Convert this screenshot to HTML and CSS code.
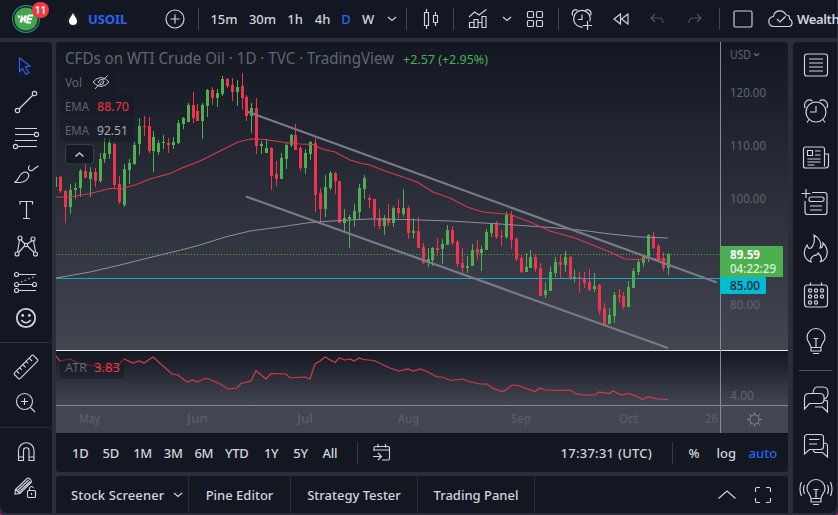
FILE: index.html
```
<!DOCTYPE html>
<html lang="en">
<head>
<meta charset="utf-8">
<title>USOIL</title>
<link rel="stylesheet" href="styles.css">
</head>
<body>
<div class="app">
  <header class="topbar">
    <div class="cell logo">
      <svg class="i" viewBox="-14 -14 28 28"><circle r="13.4" stroke="#1f8f83"/><circle r="11.6" fill="#43a64a" stroke="none"/><path d="M-7.500-3.500l1 2.500M-4-3.500L-5.500 3.500 0-3.500-1.500 3.500M2-3.500h5M1 0h5M0 3.500h5M2.500-3.500L1 3.500" stroke="#fff" stroke-width="1.900"/></svg>
      <span class="badge">11</span>
    </div>
    <div class="cell symbol">
      <svg class="i" viewBox="-14 -14 28 28"><circle r="8" fill="#1b1d21" stroke="none"/><path d="M0-6C2-2 4-.5 4 2a4 4 0 0 1-8 0C-4-.5-2-2 0-6z" fill="#fff" stroke="none"/></svg>
      <span>USOIL</span>
    </div>
    <div class="cell div"><svg class="i" viewBox="-14 -14 28 28"><circle r="9"/><path d="M-4.5 0h9M0-4.5v9"/></svg></div>
    <div class="cell"></div>
    <div class="cell">15m</div>
    <div class="cell">30m</div>
    <div class="cell">1h</div>
    <div class="cell">4h</div>
    <div class="cell blue">D</div>
    <div class="cell">W</div>
    <div class="cell"><svg class="i" viewBox="-14 -14 28 28"><path d="M-4-2l4 3.5L4-2"/></svg></div>
    <div class="cell div"></div>
    <div class="cell div"><svg class="i" viewBox="-14 -14 28 28"><path d="M-6.5-6.500h4v13h-4zM-4.500-10v3.500M-4.500 6.500v3.500M2.500-3.500h4v7h-4zM4.500-7v3.500M4.500 3.500v3.500"/></svg></div>
    <div class="cell"><svg class="i" viewBox="-14 -14 28 28"><path d="M-8.500 8.500v-5h4.500v5zM-4 8.500v-8h4v8zM0 8.500v-5h4v5M4 8.500v-11h4v11zM-9-2l5.500-5 4.500 3 7.500-5.500"/></svg></div>
    <div class="cell"><svg class="i" viewBox="-14 -14 28 28"><path d="M-4-2l4 3.500L4-2"/></svg></div>
    <div class="cell div"><svg class="i" viewBox="-14 -14 28 28"><rect x="-7.500" y="-7.500" width="6" height="6" rx="1"/><rect x="1.500" y="-7.500" width="6" height="6" rx="1"/><rect x="-7.500" y="1.500" width="6" height="6" rx="1"/><rect x="1.500" y="1.500" width="6" height="6" rx="1"/></svg></div>
    <div class="cell"><svg class="i" viewBox="-14 -14 28 28"><path d="M1 8A8.300 8.300 0 1 1 7.800 2.500M0-4.500v5h-4M-9.500-3.500C-11-8-7-10.500-4.500-8.500M8.500-3.500C10.500-8 6-10.500 3.500-8.500M5.500 2v9M1 6.500h9"/></svg></div>
    <div class="cell"><svg class="i" viewBox="-14 -14 28 28"><path d="M-.5-5v10l-6.500-5zM7-5v10L.5 0z"/></svg></div>
    <div class="cell dim"><svg class="i" viewBox="-14 -14 28 28"><path d="M-2-5l-4 4 4 4M-6-1H2q4 0 4 5"/></svg></div>
    <div class="cell dim"><svg class="i" viewBox="-14 -14 28 28"><path d="M2-5l4 4-4 4M6-1h-8q-4 0-4 5"/></svg></div>
    <div class="cell div"></div>
    <div class="cell"><svg class="i" viewBox="-14 -14 28 28"><rect x="-9" y="-8" width="18" height="16" rx="1.500"/></svg></div>
    <div class="cell cloud"><svg class="i" viewBox="-14 -14 28 28"><path d="M-7 7.500a5 5 0 0 1-.5-10c1-7 10-7.500 12.500-1.500 3 0 4 1.500 3.500 4 4 2 3 7.500-.5 7.500zM-4 0l3 3 5.500-5.500"/></svg><span>Wealth</span></div>
  </header>

  <nav class="left">
    <div class="tool blue"><svg class="i" viewBox="-14 -14 28 28"><path d="M-6.500-8l10.500 8-4.500 1 3.500 6-3 1.500-3.500-6-3 3z"/></svg></div>
    <div class="tool"><svg class="i" viewBox="-14 -14 28 28"><circle cx="8.500" cy="-8.500" r="2.200"/><circle cx="-8.500" cy="8.500" r="2.200"/><path d="M7-7L-7 7"/></svg></div>
    <div class="tool"><svg class="i" viewBox="-14 -14 28 28"><path d="M-11-9.500h22M-11-3.500H8.500M-11 2.500h22M-8.500 8.500H11"/><circle cx="10.500" cy="-3.500" r="2.100"/><circle cx="-10.500" cy="8.500" r="2.100"/></svg></div>
    <div class="tool"><svg class="i" viewBox="-14 -14 28 28"><path d="M-11.500 8.500C-6 6-8-1-1-2c3 0 5 3 3 6-3 5-8 4.500-13.500 4.500M2.500-6.500c0 5 5 3 6 1L12.500-8M2.500-6.500l1-2"/></svg></div>
    <div class="tool"><svg class="i" viewBox="-14 -14 28 28"><path d="M-6-5.500v-3H6.500v3M.5-8.500V8.500M-3 8.500h7"/></svg></div>
    <div class="tool"><svg class="i" viewBox="-14 -14 28 28"><circle cx="-6" cy="-8" r="2"/><circle cx="7" cy="-7" r="2"/><circle cx="-9" cy="8" r="2"/><circle cx="9.500" cy="8" r="2"/><circle cy="-1" r="1.600"/><path d="M-6.500-6L-8.500 6M-5-6l4 4M6-5.500L1.500-2M7.500-5l2 11M-7.500 6.500L-1.500 0M1.500 0L8 6.500"/></svg></div>
    <div class="tool"><svg class="i" viewBox="-14 -14 28 28"><circle cx="-9.500" cy="-7.500" r="2"/><circle cx="-9.500" cy="2.500" r="2"/><circle cx="8.500" cy="2.500" r="2"/><circle cx="-9.500" cy="8.500" r="2"/><path d="M-7.500-7.500H10M-7.500 2.500H6.500M-7.500 8.500H10"/><path d="M-5 0L10-6" stroke-dasharray="1.500 2.500"/></svg></div>
    <div class="tool"><svg class="i" viewBox="-14 -14 28 28"><circle r="9.200" stroke-width="1.800"/><circle cx="-3.300" cy="-2.500" r="1.400" fill="currentColor" stroke="none"/><circle cx="3.300" cy="-2.500" r="1.400" fill="currentColor" stroke="none"/><path d="M-4.800 2q4.800 5.500 9.600 0" stroke-width="1.500"/></svg></div>
    <hr>
    <div class="tool"><svg class="i" viewBox="-14 -14 28 28"><g transform="rotate(-45)"><rect x="-13.500" y="-4" width="27" height="8" rx="1.500"/><path d="M-9.500-4v4M-5-4v3M-.5-4v4M4-4v3M8.500-4v4"/></g></svg></div>
    <div class="tool"><svg class="i" viewBox="-14 -14 28 28"><circle cx="-1.500" cy="-1.500" r="8"/><path d="M4.500 4.500l4.500 4.500M-5 -1.500h7M-1.500-5v7"/></svg></div>
    <hr>
    <div class="tool"><svg class="i" viewBox="-14 -14 28 28"><path d="M-7.500 8.500V-1.500a7.500 7.500 0 0 1 15.500 0v10H3v-10a2.700 2.700 0 0 0-5.500 0v10zM-7.500 5h5M3 5h5"/></svg></div>
    <div class="tool"><svg class="i" viewBox="-14 -14 28 28"><path d="M-10.500 1.500L1.500-10q3 0 4 4L-6 5.500l-5 .5zM-8.500 2.500L2.500-8M-7 4L4-6.500M-10.500 1.500l4.500 4"/><rect x="1.500" y="2.500" width="8" height="7" rx="1"/><path d="M3.500 2V0q2-3 4 0M5.500 5v2"/></svg></div>
  </nav>

  <main class="chart">
    <svg class="plot" width="732" height="391" viewBox="56 42 732 391">
      <defs><linearGradient id="g" x1="0" y1="0" x2="0" y2="1"><stop offset="0" stop-color="#131722"/><stop offset="1" stop-color="#434651"/></linearGradient></defs>
      <rect x="56" y="42" width="732" height="308" fill="url(#g)"/>
      <rect x="56" y="351" width="732" height="54" fill="url(#g)"/>
      <rect x="56" y="405" width="732" height="28" fill="#434651"/>
      <path class="price" d="M56 254.500H720"/>
      <g id="candles"></g>
      <path class="level" d="M56 278.500H720"/>
      <path class="ema slow" d="M56 278L90 272 120 265 150 257.500 185 249 200 245 225 237 250 231 280 227 310 222.500 340 220.500 370 219 405 219.500 450 221 500 224 550 227.500 580 230 610 234 640 237 668 238"/>
      <path class="ema" d="M56 197L70 197 90 193.500 110 188.500 122 188.500 135 185 150 179 170 173.500 182 168 200 161 220 151 238 142 250 139 265 139.500 285 142.500 300 144 313 144.500 322 149 335 152 350 160 360 163 370 165 385 171 400 176 417 182 433 192 450 198 467 207 483 212 510 214.500 530 222 550 231 575 238 600 248 612 253 625 259 640 259.500 650 258 668 260"/>
      <path class="trend" d="M247 111.500L717 282.500M246 196.500L668 348"/>
      <path class="ema" d="M56 356L60 361 70 359 78 363 88 365 100 367 112 368 120 363 124 359 133 363 139 361 144 363 153 357 172 374 178 375 187 382 193 380 197 382 205 378.500 209 379 220 384 228 389 237 388 241 383.500 251 381 256 370.500 266 379 271 373.500 286 374 290 378 305 377 310 379 315 364 320 361 325 357 335 362.500 339 358 345 360 350 359 354 361 359 358 363 359.500 374 360.500 390 368 399 371 408 369 413 371 420 369 427 371.500 437 377 442 377 451 380.500 463 379 467 381 480 384 487 384 492 388 502 391.500 506 390 512 385 518 385.500 535 391.500 540 388 545 390 560 390.500 570 390 575 393.500 583 395 595 395 599 392 609 393.500 613 391 621 395 629 393.500 636 396 643 399.500 648 397 658 399 668 399.500"/>
      <rect x="56" y="350" width="732" height="1" fill="#e8e9ec"/>
      <path d="M56 405.500H788M720.500 42V433" stroke="#868993" fill="none"/>
      <g class="panel"><rect x="60" y="71" width="54" height="23"/><rect x="60" y="95" width="74" height="23"/><rect x="60" y="119" width="74" height="23"/><rect x="60" y="356" width="64" height="23"/></g>
      <rect x="65.500" y="144.500" width="28" height="19.500" rx="3" fill="#161a25" stroke="#3a3e49"/>
      <path class="eye" d="M75.500 156.500l4-3.500 4 3.500" stroke-width="1.600"/>
      <path class="eye" d="M93 82q8-9 16 0-8 9-16 0M95 89L107.500 75.500M98 83q1-4 5-4M104 81q0 4-4 4"/>
      <g class="lab">
        <text class="title" x="65" y="64" textLength="329" lengthAdjust="spacingAndGlyphs">CFDs on WTI Crude Oil · 1D · TVC · TradingView</text>
        <text class="val gain" x="403" y="63.500" textLength="85" lengthAdjust="spacingAndGlyphs">+2.57 (+2.95%)</text>
        <text x="65" y="86.500" textLength="17" lengthAdjust="spacingAndGlyphs">Vol</text>
        <text x="65" y="111" textLength="24" lengthAdjust="spacingAndGlyphs">EMA</text><text class="val red" x="97" y="111" textLength="32" lengthAdjust="spacingAndGlyphs">88.70</text>
        <text x="65" y="135" textLength="24" lengthAdjust="spacingAndGlyphs">EMA</text><text class="val gray" x="97" y="135" textLength="31" lengthAdjust="spacingAndGlyphs">92.51</text>
        <text x="65" y="372" textLength="22" lengthAdjust="spacingAndGlyphs">ATR</text><text class="val red" x="94" y="372" textLength="26" lengthAdjust="spacingAndGlyphs">3.83</text>
        <text x="730" y="59" textLength="21" lengthAdjust="spacingAndGlyphs">USD</text>
        <text x="730" y="97" textLength="36" lengthAdjust="spacingAndGlyphs">120.00</text>
        <text x="730" y="150" textLength="36" lengthAdjust="spacingAndGlyphs">110.00</text>
        <text x="730" y="203" textLength="36" lengthAdjust="spacingAndGlyphs">100.00</text>
        <text x="730" y="309" textLength="30" lengthAdjust="spacingAndGlyphs">80.00</text>
        <text x="730" y="400" textLength="24" lengthAdjust="spacingAndGlyphs">4.00</text>
      </g>
      <path d="M754 53.500l2.500 2 2.500-2" fill="none" stroke="#6d707b" stroke-width="1.400"/>
      <g class="lab time">
        <text x="79" y="423" textLength="21" lengthAdjust="spacingAndGlyphs">May</text><text x="187" y="423" textLength="21" lengthAdjust="spacingAndGlyphs">Jun</text><text x="297" y="423" textLength="16" lengthAdjust="spacingAndGlyphs">Jul</text><text x="398" y="423" textLength="21" lengthAdjust="spacingAndGlyphs">Aug</text><text x="511" y="423" textLength="20" lengthAdjust="spacingAndGlyphs">Sep</text><text x="619" y="423" textLength="19" lengthAdjust="spacingAndGlyphs">Oct</text><text x="705" y="423" textLength="13" lengthAdjust="spacingAndGlyphs">26</text>
      </g>
      <rect x="720" y="246" width="63" height="31" rx="1" fill="#4caf50"/>
      <rect x="720" y="277" width="46" height="17" rx="1" fill="#00bcd4"/>
      <g class="tag"><text class="strong" x="730" y="258.500" textLength="30" lengthAdjust="spacingAndGlyphs" fill="#fff">89.59</text><text x="730" y="273" textLength="46" lengthAdjust="spacingAndGlyphs" fill="#d9f3da">04:22:29</text><text x="730" y="290" textLength="30" lengthAdjust="spacingAndGlyphs" fill="#0c2228">85.00</text></g>
      <g transform="translate(754.500 419.500)" stroke="#858893" fill="none"><circle r="4.700"/><path d="M0-5v-2.500M0 5v2.500M-5 0h-2.500M5 0h2.500M-3.500-3.500l-1.800-1.800M3.500 3.500l1.800 1.800M-3.500 3.500l-1.800 1.800M3.500-3.500l1.800-1.800"/></g>
    </svg>
    <div class="ranges">
      <span>1D</span><span>5D</span><span>1M</span><span>3M</span><span>6M</span><span>YTD</span><span>1Y</span><span>5Y</span><span>All</span>
      <b class="bar"></b>
      <svg class="i cal" viewBox="-14 -14 28 28"><path d="M-8-2v-3q0-1.500 1.500-1.500H6q1.500 0 1.500 1.500V5q0 2-1.500 2H0M-8-3H7.500M-4-9v3.500M3.500-9v3.500M-9 3.500h8M-4 0l3.500 3.500L-4 7"/></svg>
      <span class="clock">17:37:31 (UTC)</span>
      <b class="bar"></b>
      <span class="pct">%</span><span class="log">log</span><span class="blue auto">auto</span>
    </div>
  </main>

  <footer class="tabs">
    <div class="tab first">Stock Screener<svg class="i" viewBox="-14 -14 28 28"><path d="M-4-2l4 3.500L4-2"/></svg></div>
    <div class="tab">Pine Editor</div>
    <div class="tab">Strategy Tester</div>
    <div class="tab">Trading Panel</div>
    <div class="ends">
      <svg class="i" viewBox="-14 -14 28 28"><path d="M-8.500 3.500L0-4l8.500 7.500"/></svg>
      <svg class="i" viewBox="-14 -14 28 28"><path d="M-7.500-3v-3q0-1.500 1.500-1.500h3M3-7.500h3q1.500 0 1.500 1.500v3M7.500 3v3q0 1.500-1.500 1.500H3M-3 7.500h-3q-1.500 0-1.500-1.500V3"/></svg>
    </div>
  </footer>

  <aside class="right">
    <div class="rt"><svg class="i" viewBox="-14 -14 28 28"><rect x="-11.500" y="-11" width="23" height="22" rx="2.500"/><path d="M-7-6H7M-7-2H7M-7 2H7M-7 6H7"/></svg></div>
    <div class="rt"><svg class="i" viewBox="-14 -14 28 28"><circle cy="1" r="10"/><path d="M0-5v6h-6M-11-3C-13-9-8-13-3.500-10M11-3C13-9 8-13 3.500-10M-7 8.500l-2 3M7 8.500l2 3"/></svg></div>
    <div class="rt"><svg class="i" viewBox="-14 -14 28 28"><path d="M8.500 9.500V-8q0-2-2-2h-17q-2 0-2 2V9q0 2 2 2h20q3 0 3-3v-11h-4M-8.500-6.500h5v5h-5zM-1-6h5.500M-1-2h5.500M-8.500 2H4.500M-8.500 5H4.500M-8.500 8h7"/></svg></div>
    <div class="rt"><svg class="i" viewBox="-14 -14 28 28"><path d="M-11-2V9q0 2.500 2.500 2.500h17q2.500 0 2.500-2.500V-8q0-2.500-2.500-2.500H-4M-10-14v9M-14.500-9.500h9M-6 3H6M-6 7H6"/><rect x="-7" y="-6" width="15" height="4.500" rx="2"/></svg></div>
    <div class="rt"><svg class="i" viewBox="-14 -14 28 28"><path d="M-5 13C-13 10-13 2-9-4c1 3 2 4 4 3 3-3 4-7 3-13C4-11 6-5 4-1c2 0 3-2 3-5C13 0 13 10 4 13c3-3 1-6-2-9-1 2-2 3-3 2-4 2-5 4-4 7z"/></svg></div>
    <div class="rt"><svg class="i" viewBox="-14 -14 28 28"><rect x="-11.500" y="-10" width="23" height="22" rx="3"/><path d="M-5.500-12.500v3M5.500-12.500v3"/><g><circle cx="-6" cy="-4.500" r="1.600"/><circle cy="-4.500" r="1.600"/><circle cx="6" cy="-4.500" r="1.600"/><circle cx="-6" cy="1.500" r="1.600"/><circle cy="1.500" r="1.600"/><circle cx="6" cy="1.500" r="1.600"/><circle cx="-6" cy="7.500" r="1.600"/><circle cy="7.500" r="1.600"/></g></svg></div>
    <div class="rt"><svg class="i" viewBox="-14 -14 28 28"><path d="M-5 6.500C-5 3-9 1-9-3.500a9 9 0 0 1 18 0C9 1 5 3 5 6.500zM-5 6.500V10h10V6.500M-3 12.500h6M-2.500-2.500h5M0-2.500v9"/></svg></div>
    <hr>
    <div class="rt"><svg class="i" viewBox="-14 -14 28 28"><path d="M-3-7q1-6 4-6h6q5 0 5 5.500T8-1M-7-6.500H4q4 0 4 4v2q0 4-4 4H-6.500L-11.500 9v-11q0-4.500 4.500-4.500zM8 0l3.500 1V12L6.500 7H-1"/></svg></div>
    <div class="rt"><svg class="i" viewBox="-14 -14 28 28"><path d="M-8.500-11.500H4.500q3 0 3 3v9q0 3-3 3h-11l-5 4.500V-8.500q0-3 3-3zM-7-6.500H3.500M-7-2H1M7.500-3q4 0 4 3v11l-5-4.500H-1l-2-2"/></svg></div>
    <div class="rt"><svg class="i" viewBox="-14 -14 28 28"><path d="M-5 6.500C-5 3-9 1-9-3.500a9 9 0 0 1 18 0C9 1 5 3 5 6.500zM-5 6.500V10h10V6.500M-3 12.500h6M-2.500-2.500h5M0-2.500v9M-11.500-7q-2 4 0 9M-14.500-10q-3 7 0 14M11.500-7q2 4 0 9M14.500-10q3 7 0 14"/></svg></div>
  </aside>
  <i class="corner bl"></i><i class="corner br"></i>
</div>
<script src="chart.js"></script>
</body>
</html>
```
FILE: styles.css
```
* { box-sizing: border-box; }
body {
  margin: 0;
  background: #2a2e39;
  color: #d1d4dc;
  font: 13px "Trebuchet MS", "Noto Sans", "Open Sans", sans-serif;
}
.app {
  position: relative;
  display: grid;
  width: 838px;
  height: 515px;
  overflow: hidden;
  grid-template: 38px 430px 37px / 52px 732px 45px;
  column-gap: 4px;
  row-gap: 4px;
  grid-template-areas: "top top top" "left chart right" "left tabs right";
}
.i { width: 28px; height: 28px; flex: none; overflow: visible; fill: none; stroke: currentColor; stroke-width: 1.15; }
.blue { color: #2f62f5; }
.dim { color: #50535e; }

.topbar {
  grid-area: top;
  display: grid;
  background: #131722;
  grid-template-columns: 52px 98px 49px 6px 38px 39px 26px 29px 18px 26px 22px 4px 47px 48px 9px 48px 46px 32px 40px 36px 7px 46px 72px;
  font-weight: 500;
}
.cell { position: relative; display: flex; align-items: center; justify-content: center; min-width: 0; white-space: nowrap; }
.div::after { content: ""; position: absolute; right: 0; top: 8px; width: 1px; height: 22px; background: #434651; }
.symbol { justify-content: flex-start; padding-left: 7px; color: #2f62f5; font-weight: 700; }
.symbol span { letter-spacing: -.1px; margin-left: 1px; }
.cloud { justify-content: flex-start; padding-left: 1px; }
.cloud span { margin-left: 2px; font-weight: 600; letter-spacing: -.35px; }
.badge { position: absolute; left: 32px; top: 2px; width: 17px; height: 16px; border-radius: 8px; background: #f23645; color: #fff; font-size: 10px; line-height: 16px; font-weight: 600; text-align: center; }

.left { grid-area: left; background: #131722; border-radius: 0 4px 0 8px; padding-top: 6px; }
.tool { height: 36px; display: flex; align-items: center; justify-content: center; }
.left hr { border: 0; height: 1px; background: #2a2e39; margin: 6px 0; }

.chart { grid-area: chart; border-radius: 4px; overflow: hidden; background: #131722; }
.plot { display: block; }
.price { stroke: #4caf50; stroke-dasharray: 1 2; }
.level { stroke: #16aabd; stroke-width: 1.2; }
.ema { fill: none; stroke: #d83a4b; stroke-width: 1.2; }
.slow { stroke: #8e919b; stroke-width: 1; }
.trend { stroke: #787b86; stroke-width: 2.2; fill: none; }
.up { fill: #4caf50; }
.down { fill: #ef3350; }
.panel rect { fill: #131722; fill-opacity: .5; }
.eye { fill: none; stroke: #c3c6cf; }
.lab text { fill: #62656f; font-size: 12px; }
.lab .title { font-size: 15.5px; }
.lab .val { font-size: 13px; }
.lab .gain { fill: #4caf50; font-size: 12.5px; }
.lab .red { fill: #f23645; }
.lab .gray { fill: #a9acb6; }
.time text { fill: #5b5e69; font-weight: 500; }
.tag text { font-size: 12px; font-weight: 500; }
.tag .strong { font-weight: 700; }

.ranges { height: 39px; display: flex; align-items: center; padding-left: 16px; font-weight: 500; white-space: nowrap; }
.ranges span { width: 30.6px; letter-spacing: -.3px; }
.ranges span:nth-child(6) { width: 39px; }
.ranges span:nth-child(7), .ranges span:nth-child(8) { width: 29.3px; }
.ranges span:nth-child(9) { width: 34px; }
.bar { width: 1px; height: 22px; background: #363a45; }
.ranges .cal { margin-left: 10px; }
.ranges .clock { margin-left: 165px; width: 111px; letter-spacing: .25px; }
.ranges .pct { margin-left: 16px; width: 28px; letter-spacing: 0; }
.ranges .log { width: 32px; letter-spacing: 0; }
.ranges .auto { width: 34px; letter-spacing: 0; }

.tabs { grid-area: tabs; display: flex; background: #131722; border-radius: 4px 4px 0 0; overflow: hidden; font-weight: 500; }
.tab { display: flex; align-items: center; justify-content: center; border-right: 1px solid #2a2e39; width: 127px; white-space: nowrap; }
.tab.first { width: 133px; justify-content: flex-start; padding-left: 15px; letter-spacing: .1px; }
.tab:nth-child(2) { width: 102px; }
.tab:nth-child(4) { width: 117px; }
.ends { margin-left: auto; display: flex; align-items: center; gap: 8px; padding-right: 11px; }

.right { grid-area: right; background: #131722; border-radius: 4px 0 8px 0; margin-left: 1px; padding-left: 1px; }
.rt { height: 46px; display: flex; align-items: center; justify-content: center; }
.right hr { border: 0; height: 1px; background: #50535e; margin: 6px 5px; }
.corner { position: absolute; bottom: -2px; width: 8px; height: 10px; border: 1.5px solid #c2187a; border-top: 0; }
.bl { left: -2px; border-right: 0; border-radius: 0 0 0 9px; }
.br { right: -2px; border-left: 0; border-radius: 0 0 9px 0; }
```
FILE: chart.js
```
// direction, body top, body bottom, high, low
const bars = `g 178 186 177 187|r 177 191 176 193|r 191 207 190 223|g 190 207 184 214|g 188 190 183 199|g 171 188 169 197|r 171 178 162 178|g 172 179 167 197|r 172 181 168 187|g 159 181 153 183
g 153 159 138 163|g 143 154 139 159|r 144 185 143 188|r 184 202 176 204|g 169 205 164 207|g 163 170 159 184|g 145 164 142 165|g 126 144 118 155|r 126 127 116 136|r 126 151 117 153
g 137 151 131 172|g 143 152 140 155|g 142 143 135 149|r 143 145 138 153|g 142 145 137 149|g 123 143 120 144|g 118 124 117 129|g 105 122 103 122|r 105 118 92 123|r 111 121 104 121
g 105 121 103 139|g 90 106 89 117|r 90 98 87 105|g 93 98 89 107|g 79 94 76 96|r 79 86 78 88|r 85 92 78 101|g 87 92 80 106|r 86 98 73 110|r 97 116 95 121
g 108 116 103 133|r 108 146 98 154|g 144 146 141 154|g 148 153 139 153|r 148 176 147 190|r 174 179 161 186|g 158 179 153 179|g 145 159 143 169|g 135 145 134 147|r 135 150 124 150
r 148 168 146 171|g 153 168 149 174|g 142 154 141 160|r 143 195 138 212|r 193 209 188 223|g 187 209 175 217|g 173 188 171 190|r 173 181 172 194|r 181 223 181 223|g 218 223 209 232
g 217 219 215 248|g 211 219 204 227|g 188 212 184 220|g 178 189 175 199|r 198 200 195 208|r 199 218 199 227|r 218 226 209 229|g 218 226 215 235|r 218 223 204 226|g 208 223 206 227
r 208 213 199 218|g 208 214 189 217|r 208 233 206 239|g 231 233 218 238|r 231 248 217 248|r 247 263 243 264|g 259 263 248 267|g 248 260 247 266|r 248 250 238 256|g 244 249 239 264
g 230 245 225 245|r 230 243 226 245|r 242 264 240 267|r 263 268 248 274|g 266 268 256 273|g 250 266 244 266|r 249 253 240 260|g 249 253 246 271|g 232 250 229 250|g 224 233 223 237
r 223 237 221 239|r 236 237 230 246|g 215 237 212 239|r 215 240 211 249|r 239 259 237 261|r 258 272 254 273|g 267 272 253 272|g 257 268 250 268|r 257 269 254 272|r 268 296 263 296
g 290 295 282 298|g 272 291 266 291|g 262 273 257 277|r 262 265 255 278|g 257 265 251 272|r 257 278 256 280|g 277 278 270 282|r 277 278 272 293|r 278 283 272 288|r 282 290 269 291
g 286 289 273 292|r 285 311 284 315|r 308 325 303 326|g 315 324 308 324|g 295 316 292 323|r 295 297 289 303|r 296 307 292 309|g 287 307 281 307|g 271 288 268 288|g 262 272 260 275
g 257 263 256 267|g 235 258 234 262|r 236 248 232 249|r 246 260 244 262|r 258 268 252 271|g 254 268 253 275`.split(/[|\n]/);

const layer = document.getElementById("candles");
layer.innerHTML = bars.map((row, i) => {
  const [dir, top, bottom, high, low] = row.split(" ");
  const x = Math.floor(56 + 612 * i / (bars.length - 1));
  const cls = dir === "g" ? "up" : "down";
  return `<rect class="${cls}" x="${x}" y="${high}" width="1" height="${low - high}"/>` +
    `<rect class="${cls}" x="${i ? x - 1 : x}" y="${top}" width="${i ? 3 : 1}" height="${Math.max(1, bottom - top)}"/>`;
}).join("");
```
